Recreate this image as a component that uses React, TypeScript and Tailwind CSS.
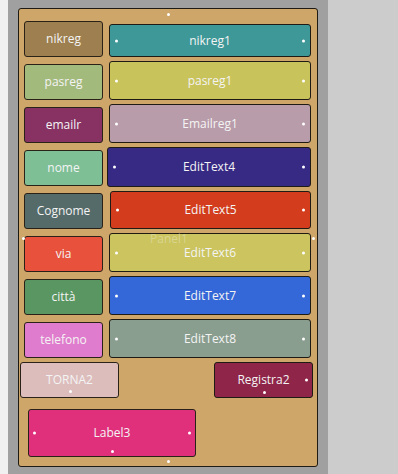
import React from 'react';

type Box = { text: string; bg: string; h: number; ml?: number; w?: number };

const labels: Box[] = [
  { text: 'nikreg', bg: 'bg-[#9e7f4f]', h: 36 },
  { text: 'pasreg', bg: 'bg-[#a3ba7d]', h: 36 },
  { text: 'emailr', bg: 'bg-[#873263]', h: 36 },
  { text: 'nome', bg: 'bg-[#7ebf96]', h: 36 },
  { text: 'Cognome', bg: 'bg-[#556b6a]', h: 36 },
  { text: 'via', bg: 'bg-[#e8513b]', h: 36 },
  { text: 'città', bg: 'bg-[#5a9661]', h: 36 },
  { text: 'telefono', bg: 'bg-[#e07ccd]', h: 36 },
];

const edits: { text: string; bg: string; cls: string }[] = [
  { text: 'nikreg1', bg: 'bg-[#3f9898]', cls: 'h-[33px] w-[202px]' },
  { text: 'pasreg1', bg: 'bg-[#c8c35a]', cls: 'h-[39px] w-[202px]' },
  { text: 'Emailreg1', bg: 'bg-[#b99caa]', cls: 'h-[39px] w-[202px]' },
  { text: 'EditText4', bg: 'bg-[#372a84]', cls: 'h-[40px] w-[204px] -ml-[2px]' },
  { text: 'EditText5', bg: 'bg-[#d33c1c]', cls: 'h-[38px] w-[201px] ml-[1px]' },
  { text: 'EditText6', bg: 'bg-[#cbc45f]', cls: 'h-[39px] w-[202px]' },
  { text: 'EditText7', bg: 'bg-[#3467d7]', cls: 'h-[39px] w-[202px]' },
  { text: 'EditText8', bg: 'bg-[#8a9e8f]', cls: 'h-[39px] w-[202px]' },
];

// piccoli punti bianchi di ancoraggio (overlay)
function Dot({ className }: { className: string }) {
  return <span className={`absolute w-[3px] h-[3px] rounded-full bg-white ${className}`} />;
}

export default function App() {
  return (
    <div
      className="w-[398px] h-[474px] flex overflow-hidden text-[12px] text-[#f4f4f4]"
      style={{ fontFamily: '"Open Sans", "Noto Sans", sans-serif' }}
    >
      <div className="w-[8px] bg-[#f0f0f0]" />
      <div className="w-[320px] bg-[#a0a0a0] pt-[8px] px-[10px]">
        {/* Panel1 */}
        <div className="relative w-[300px] h-[459px] bg-[#cea66a] border border-[#1e1a14] rounded-[3px]">
          <div className="flex">
            <div className="flex flex-col gap-[7px] pt-[12px] pl-[5px]">
              {labels.map((l) => (
                <div
                  key={l.text}
                  className={`w-[79px] h-[36px] ${l.bg} border border-[#2a2218] rounded-[3px] flex items-center justify-center`}
                >
                  {l.text}
                </div>
              ))}
            </div>
            <div className="flex flex-col gap-[4px] pt-[15px] pl-[6px]">
              {edits.map((e) => (
                <div
                  key={e.text}
                  className={`relative ${e.cls} ${e.bg} border border-[#1e1a14] rounded-[3px] flex items-center justify-center`}
                >
                  {e.text}
                  <Dot className="left-[5px] top-1/2 -translate-y-1/2" />
                  <Dot className="right-[5px] top-1/2 -translate-y-1/2" />
                </div>
              ))}
            </div>
          </div>

          {/* pulsanti */}
          <div className="flex justify-between mt-[4px] pl-[1px] pr-[4px]">
            <div className="relative w-[99px] h-[36px] bg-[#dcbdbc] border border-[#2a2218] rounded-[3px] flex items-center justify-center">
              TORNA2
              <Dot className="left-[48px] bottom-[4px]" />
            </div>
            <div className="relative w-[99px] h-[36px] bg-[#8f2548] border border-[#1e1a14] rounded-[3px] flex items-center justify-center">
              Registra2
              <Dot className="right-[4px] top-1/2 -translate-y-1/2" />
              <Dot className="left-[48px] bottom-[3px]" />
            </div>
          </div>

          <div className="mt-[11px] pl-[9px]">
            <div className="relative w-[168px] h-[48px] bg-[#e0307c] border border-[#2a2218] rounded-[3px] flex items-center justify-center">
              Label3
              <Dot className="left-[4px] top-1/2 -translate-y-1/2" />
              <Dot className="right-[4px] top-1/2 -translate-y-1/2" />
              <Dot className="left-[82px] bottom-[3px]" />
            </div>
          </div>

          {/* didascalia e ancore del pannello */}
          <span className="absolute left-[131px] top-[221px] text-[12px] text-white/30 pointer-events-none">Panel1</span>
          <Dot className="left-[148px] top-[4px]" />
          <Dot className="left-[148px] bottom-[3px]" />
          <Dot className="left-[3px] top-[228px]" />
          <Dot className="left-[293px] top-[228px]" />
        </div>
      </div>
      <div className="flex-1 bg-[#cccccc]" />
    </div>
  );
}
